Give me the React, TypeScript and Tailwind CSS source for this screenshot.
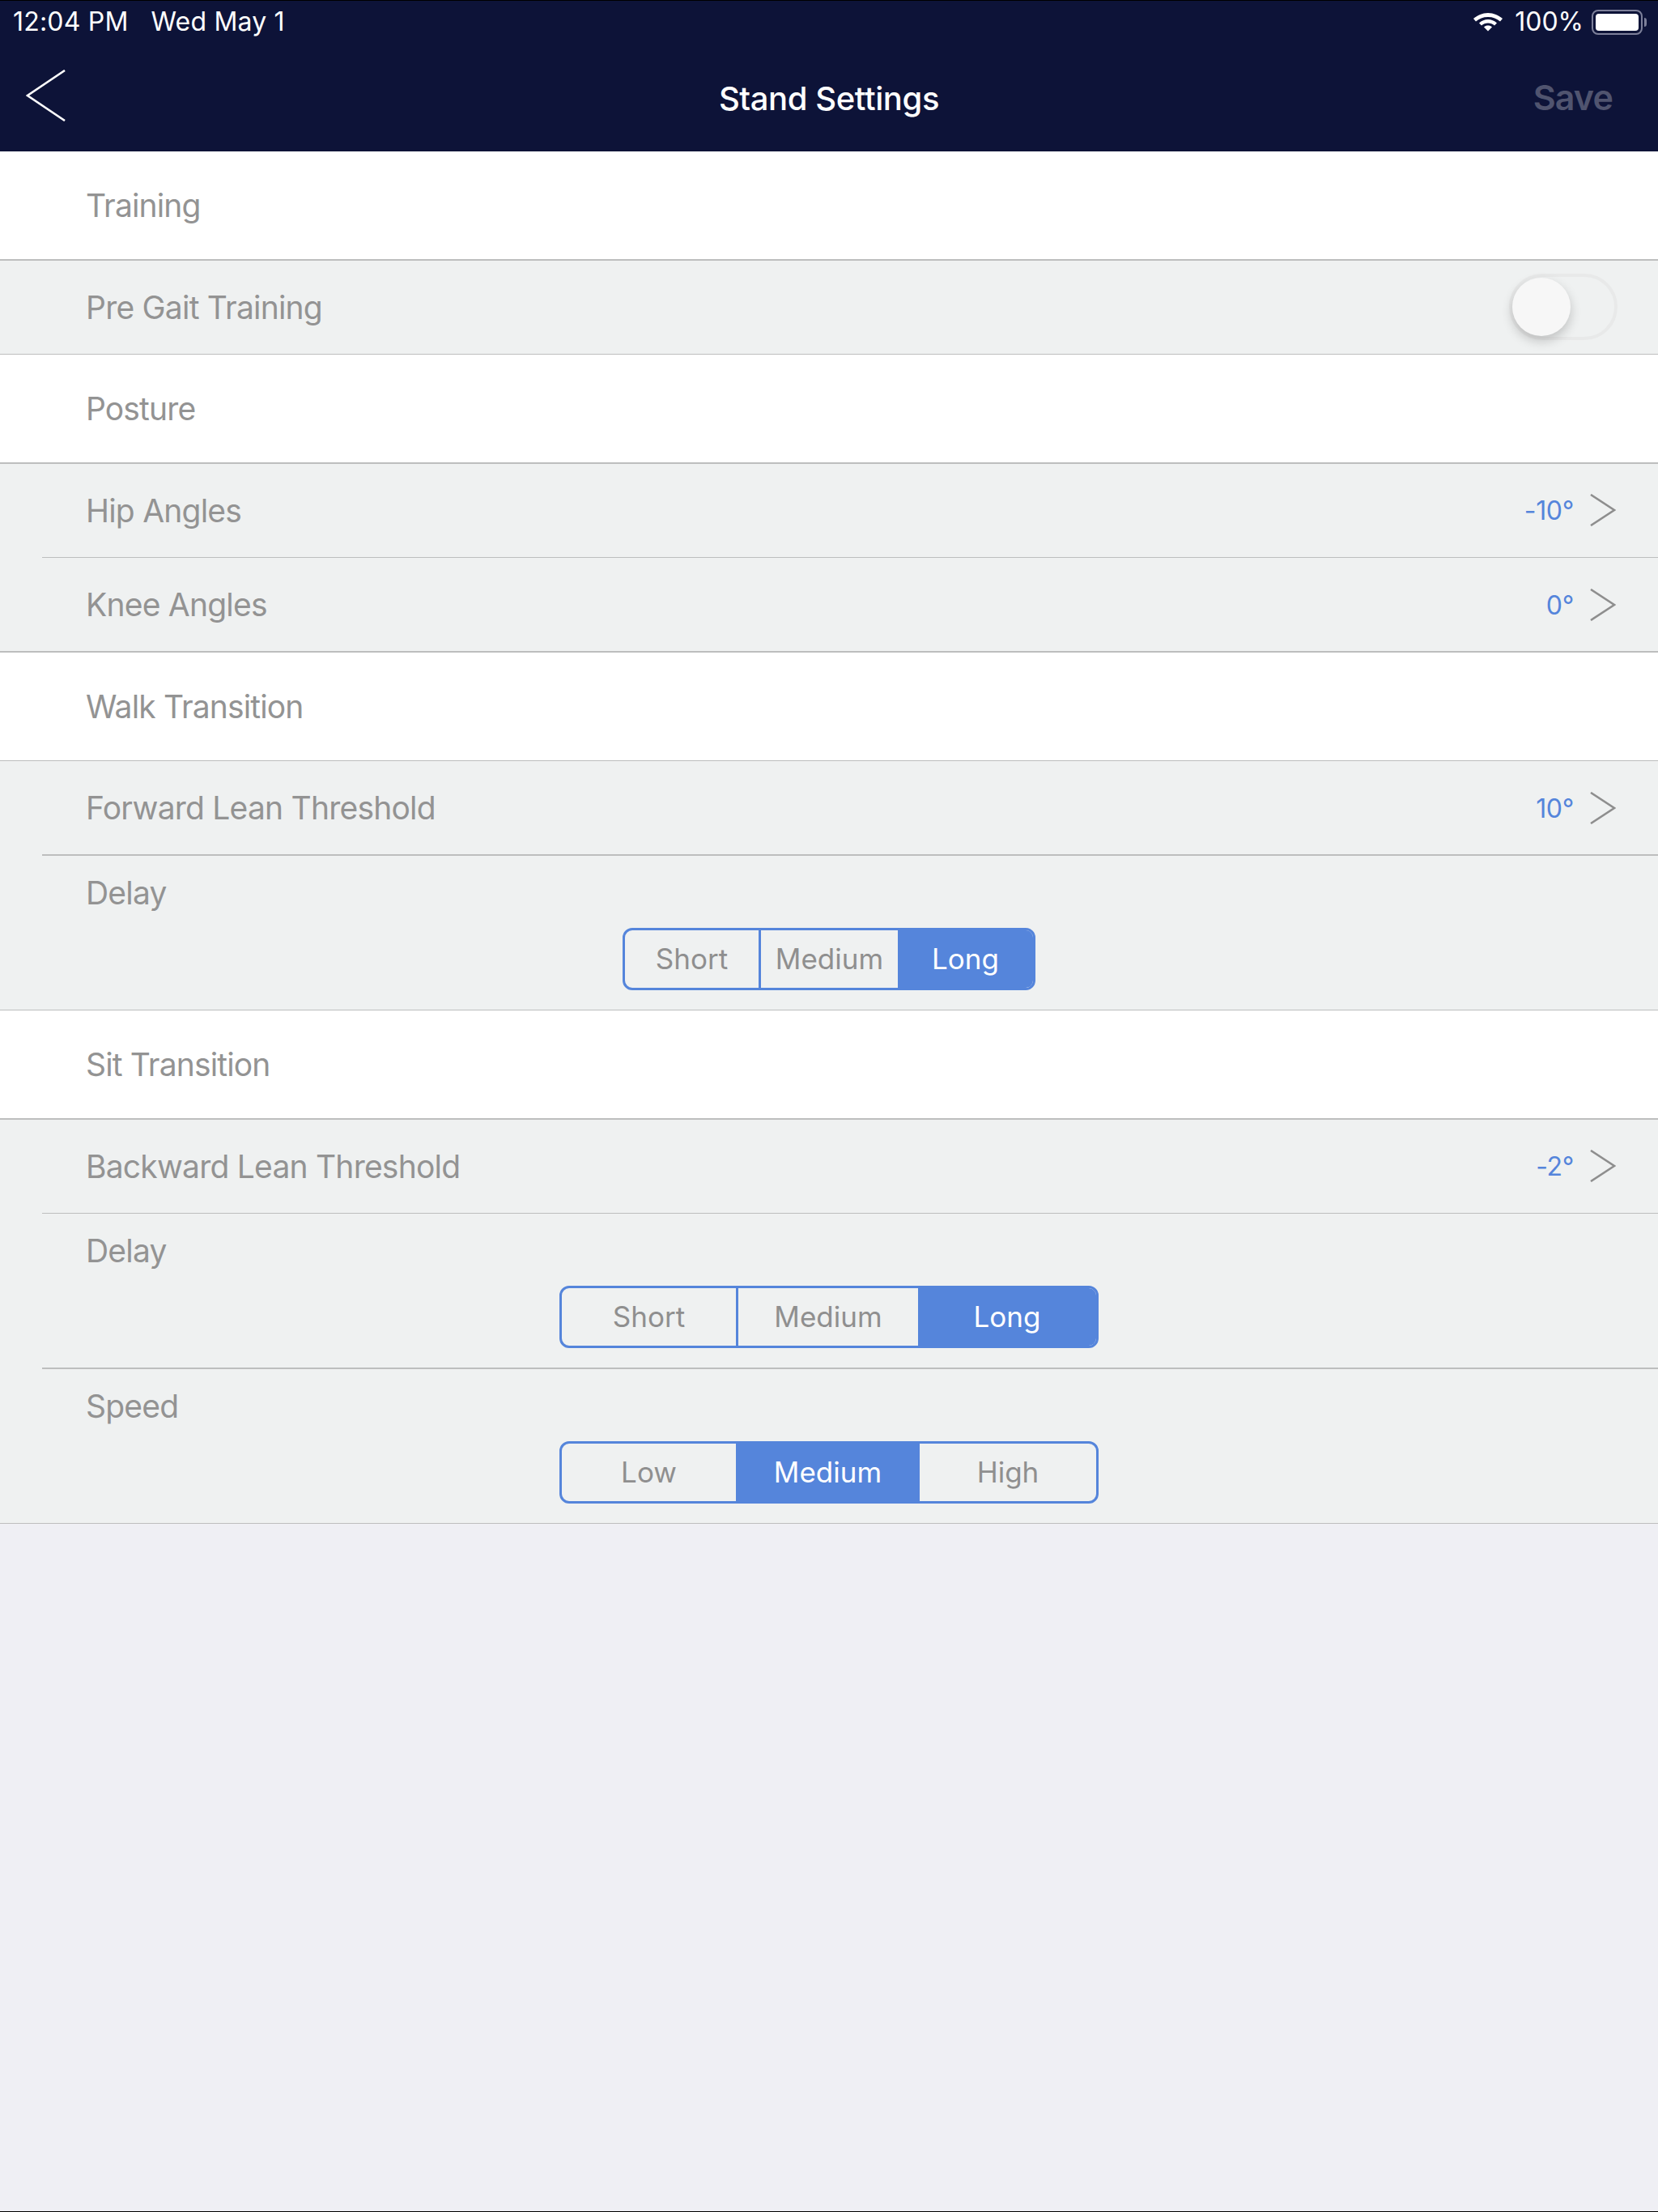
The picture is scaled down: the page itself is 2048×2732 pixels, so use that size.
import type { ReactNode } from "react";

const font = "font-['Inter','Liberation_Sans',sans-serif]";

function Line({ inset }: { inset?: boolean }) {
  return <div className={inset ? "h-[1.5px] bg-[#bdbebe] ml-[52px]" : "h-[1.5px] bg-[#bdbebe]"} />;
}

function Header({ title }: { title: string }) {
  return (
    <div className="bg-white">
      <div className="h-[133px] flex items-center pl-[106px] pt-[2px]">
        <span className="text-[39px] text-[#939393] tracking-[-0.022em]">{title}</span>
      </div>
      <Line />
    </div>
  );
}

function Chevron() {
  return (
    <svg width="32" height="40" viewBox="0 0 32 40" fill="none" className="ml-[20px]">
      <path d="M1 1 L30 20 L1 39" stroke="#8e8e8e" strokeWidth="2.6" />
    </svg>
  );
}

function Row({
  label,
  value,
  last,
  children,
}: {
  label: string;
  value?: string;
  last?: boolean;
  children?: ReactNode;
}) {
  return (
    <div className="bg-[#eff1f1]">
      <div className="h-[115px] flex items-center justify-between pl-[106px] pr-[52px]">
        <span className="mt-[2px] text-[39px] text-[#939393] tracking-[-0.02em]">{label}</span>
        {value !== undefined && (
          <div className="flex items-center">
            <span className="mt-[2px] text-[32px] text-[#5585db] tracking-[-0.01em]">{value}</span>
            <Chevron />
          </div>
        )}
        {children}
      </div>
      <Line inset={!last} />
    </div>
  );
}

function Segmented({
  items,
  selected,
  className,
}: {
  items: string[];
  selected: number;
  className: string;
}) {
  return (
    <div className={`${className} h-[77px] mx-auto grid rounded-[12px] border-[3px] border-[#5585db] overflow-hidden`}>
      {items.map((item, i) => (
        <div
          key={item}
          className={
            i === selected
              ? "flex items-center justify-center bg-[#5585db] text-white text-[35px]"
              : i < items.length - 1 && i + 1 !== selected
                ? "flex items-center justify-center border-r-[3px] border-[#5585db] text-[#8f8f8f] text-[35px]"
                : "flex items-center justify-center text-[#8f8f8f] text-[35px]"
          }
        >
          {item}
        </div>
      ))}
    </div>
  );
}

function SegmentRow({
  label,
  items,
  selected,
  className,
  last,
}: {
  label: string;
  items: string[];
  selected: number;
  className: string;
  last?: boolean;
}) {
  return (
    <div className="bg-[#eff1f1]">
      <div className="h-[190px] pt-[22px]">
        <div className="pl-[106px] h-[67px] text-[39px] leading-[48px] text-[#939393] tracking-[-0.02em]">{label}</div>
        <Segmented items={items} selected={selected} className={className} />
      </div>
      <Line inset={!last} />
    </div>
  );
}

function StatusBar() {
  return (
    <div className="h-[52px] flex items-center justify-between pl-[16px] pr-[14px] text-white text-[32px]">
      <div className="flex gap-[28px] tracking-[0.006em]">
        <span>12:04 PM</span>
        <span>Wed May 1</span>
      </div>
      <div className="flex items-center">
        <svg width="38" height="28" viewBox="0 0 38 28" fill="white">
          <path d="M19 3 C26 3 32 6 37 10 L34 13.5 C30 10 25 8 19 8 C13 8 8 10 4 13.5 L1 10 C6 6 12 3 19 3 Z" />
          <path d="M19 11 C23 11 27 12.5 30 15.5 L27 18.5 C25 16.7 22 15.5 19 15.5 C16 15.5 13 16.7 11 18.5 L8 15.5 C11 12.5 15 11 19 11 Z" />
          <path d="M19 18.5 C21 18.5 22.5 19 24 20.5 L19 25.5 L14 20.5 C15.5 19 17 18.5 19 18.5 Z" />
        </svg>
        <span className="ml-[14px]">100%</span>
        <div className="ml-[10px] w-[63px] h-[31px] rounded-[8px] border-2 border-[#7d809a] p-[3px]">
          <div className="w-full h-full rounded-[4px] bg-white" />
        </div>
        <div className="ml-[2px] w-[3px] h-[11px] rounded-r-[3px] bg-[#7d809a]" />
      </div>
    </div>
  );
}

export default function App() {
  return (
    <div className={`${font} w-[2048px] h-[2732px] bg-[#efeff4] flex flex-col border-y border-black`}>
      <div className="bg-[#0d1338] h-[186px] flex flex-col">
        <StatusBar />
        <div className="relative flex-1 flex items-center justify-between pl-[32px] pr-[56px]">
          <svg width="50" height="64" viewBox="0 0 50 64" fill="none" className="mb-[5px]">
            <path d="M48 1 L2 32 L48 63" stroke="white" strokeWidth="2.6" />
          </svg>
          <span className="absolute left-0 right-0 mt-[3px] text-center text-white text-[40px] font-medium tracking-[-0.01em]">Stand Settings</span>
          <span className="mt-[1px] text-[#50546f] text-[43px] font-semibold tracking-[-0.02em]">Save</span>
        </div>
      </div>

      <Header title="Training" />
      <Row label="Pre Gait Training" last>
        <div className="relative -mr-[2px] w-[134px] h-[82px] rounded-full border-4 border-[#e8e9e9]">
          <div className="absolute left-0 top-[1px] w-[72px] h-[72px] rounded-full bg-[#f7f7f7] shadow-[0_6px_14px_rgba(0,0,0,0.2)]" />
        </div>
      </Row>
      <Header title="Posture" />
      <Row label="Hip Angles" value="-10°" />
      <Row label="Knee Angles" value="0°" last />
      <Header title="Walk Transition" />
      <Row label="Forward Lean Threshold" value="10°" />
      <SegmentRow label="Delay" items={["Short", "Medium", "Long"]} selected={2} className="w-[510px] grid-cols-[168px_169px_1fr]" last />
      <Header title="Sit Transition" />
      <Row label="Backward Lean Threshold" value="-2°" />
      <SegmentRow label="Delay" items={["Short", "Medium", "Long"]} selected={2} className="w-[666px] grid-cols-[218px_222px_1fr]" />
      <SegmentRow label="Speed" items={["Low", "Medium", "High"]} selected={1} className="w-[666px] grid-cols-[215px_227px_1fr]" last />
    </div>
  );
}
